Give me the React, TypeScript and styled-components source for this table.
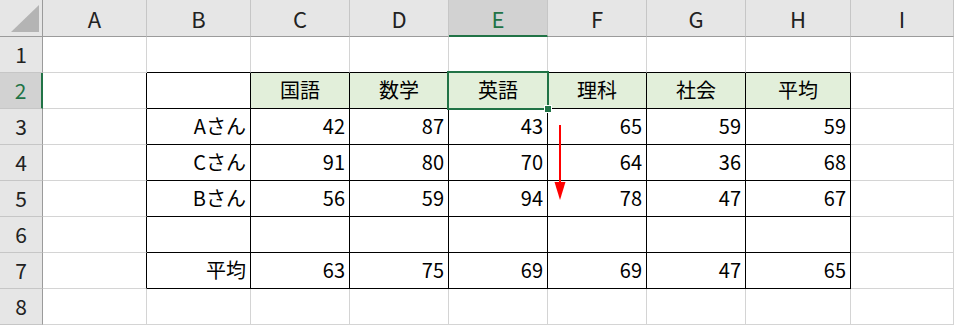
import React from 'react';
import styled, { createGlobalStyle } from 'styled-components';

const GlobalStyle = createGlobalStyle`
  html, body {
    margin: 0;
    padding: 0;
    background: #ffffff;
    overflow: hidden;
  }
  body {
    font-family: "Noto Sans CJK JP", "Noto Sans", sans-serif;
  }
`;

const GRID = '#d4d4d4';
const INK = '#000000';
const SEL = '#217346';

const COLS = ['A', 'B', 'C', 'D', 'E', 'F', 'G', 'H', 'I'];
const WIDTHS = [104, 104, 99, 99, 99, 99, 99, 105];

// rows 1..8, columns A..I
const DATA: (string | number)[][] = [
  [],
  ['', '', '国語', '数学', '英語', '理科', '社会', '平均'],
  ['', 'Aさん', 42, 87, 43, 65, 59, 59],
  ['', 'Cさん', 91, 80, 70, 64, 36, 68],
  ['', 'Bさん', 56, 59, 94, 78, 47, 67],
  ['', '', '', '', '', '', '', ''],
  ['', '平均', 63, 75, 69, 69, 47, 65],
  [],
];

const SEL_ROW = 2;
const SEL_COL = 4;

const inTable = (r: number, c: number) => r >= 2 && r <= 7 && c >= 1 && c <= 7;

const Sheet = styled.div`
  position: relative;
  display: grid;
  grid-template-columns: 43px ${WIDTHS.map((w) => `${w}px`).join(' ')} 1fr;
  grid-template-rows: 37px repeat(8, 36px);
  width: 954px;
  height: 325px;
  overflow: hidden;
`;

const Corner = styled.div`
  display: flex;
  align-items: flex-end;
  justify-content: flex-end;
  padding: 0 3px 4px 0;
  background: #e6e6e6;
  border-right: 1px solid #9b9b9b;
  border-bottom: 1px solid #9b9b9b;
`;

const ColHead = styled.div<{ $active?: boolean }>`
  display: flex;
  align-items: center;
  justify-content: center;
  background: ${({ $active }) => ($active ? '#d2d2d2' : '#e6e6e6')};
  color: ${({ $active }) => ($active ? SEL : '#222222')};
  border-right: 1px solid #c6c6c6;
  border-bottom: ${({ $active }) => ($active ? `2px solid ${SEL}` : '1px solid #9b9b9b')};
  font-size: 22px;
  line-height: 1;
`;

const RowHead = styled.div<{ $active?: boolean }>`
  display: flex;
  align-items: center;
  justify-content: center;
  background: ${({ $active }) => ($active ? '#d2d2d2' : '#e6e6e6')};
  color: ${({ $active }) => ($active ? SEL : '#222222')};
  border-right: ${({ $active }) => ($active ? `2px solid ${SEL}` : '1px solid #9b9b9b')};
  border-bottom: 1px solid #c6c6c6;
  font-size: 21px;
  line-height: 1;
`;

const Cell = styled.div<{ $right: string; $bottom: string; $fill?: string; $align: string }>`
  position: relative;
  display: flex;
  align-items: center;
  justify-content: ${({ $align }) => $align};
  padding: 0 4px 1px 4px;
  background: ${({ $fill }) => $fill || '#ffffff'};
  border-right: 1px solid ${({ $right }) => $right};
  border-bottom: 1px solid ${({ $bottom }) => $bottom};
  color: ${INK};
  font-size: 20px;
  line-height: 1;
  white-space: nowrap;
`;

const Selection = styled.div`
  position: absolute;
  top: -2px;
  left: -2px;
  right: -2px;
  bottom: -2px;
  border: 2px solid ${SEL};
  z-index: 2;
  pointer-events: none;
`;

const Handle = styled.div`
  position: absolute;
  right: -5px;
  bottom: -5px;
  width: 6px;
  height: 6px;
  background: ${SEL};
  border: 1px solid #ffffff;
`;

const Arrow = styled.svg`
  position: absolute;
  left: 553px;
  top: 124px;
  z-index: 3;
`;

const cellProps = (r: number, c: number) => {
  const right = inTable(r, c) || inTable(r, c + 1) ? INK : GRID;
  const bottom = inTable(r, c) || inTable(r + 1, c) ? INK : GRID;
  const value = DATA[r - 1][c] ?? '';
  const isHeader = r === 2 && c >= 2 && c <= 7;
  const align = isHeader ? 'center' : 'flex-end';
  return { right, bottom, value, fill: isHeader ? '#e2efda' : undefined, align };
};

export default function App() {
  return (
    <>
      <GlobalStyle />
      <Sheet>
        <Corner>
          <svg width="28" height="27" viewBox="0 0 28 27">
            <polygon points="28,0 28,27 0,27" fill="#b4b4b4" />
          </svg>
        </Corner>
        {COLS.map((c, i) => (
          <ColHead key={c} $active={i === SEL_COL}>
            {c}
          </ColHead>
        ))}
        {Array.from({ length: 8 }, (_, ri) => {
          const r = ri + 1;
          return (
            <React.Fragment key={r}>
              <RowHead $active={r === SEL_ROW}>{r}</RowHead>
              {COLS.map((_, c) => {
                const p = cellProps(r, c);
                return (
                  <Cell key={c} $right={p.right} $bottom={p.bottom} $fill={p.fill} $align={p.align}>
                    {p.value}
                    {r === SEL_ROW && c === SEL_COL && (
                      <Selection>
                        <Handle />
                      </Selection>
                    )}
                  </Cell>
                );
              })}
            </React.Fragment>
          );
        })}
        <Arrow width="14" height="78" viewBox="0 0 14 78">
          <line x1="7" y1="1" x2="7" y2="62" stroke="#ff0000" strokeWidth="2" />
          <polygon points="1.5,58 12.5,58 7,76" fill="#ff0000" />
        </Arrow>
      </Sheet>
    </>
  );
}
